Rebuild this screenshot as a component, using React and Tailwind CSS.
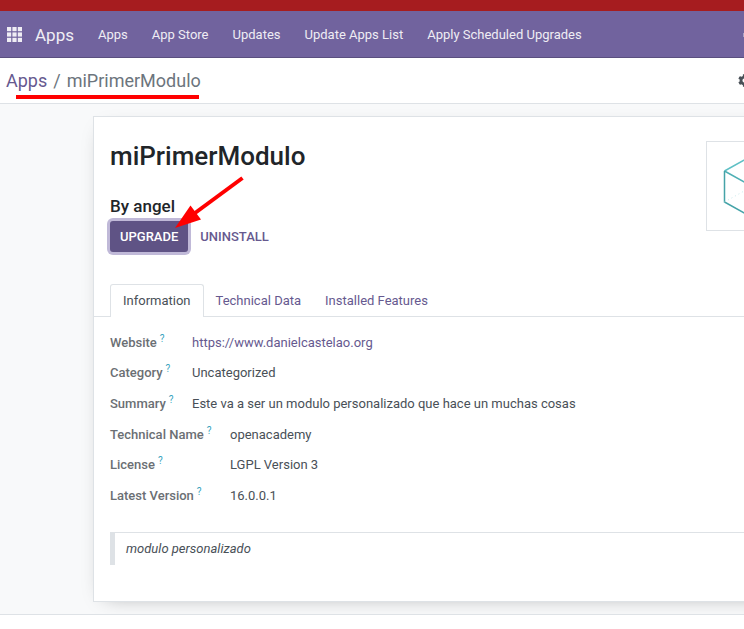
import { FaCog } from "react-icons/fa";

const menu = ["Apps", "App Store", "Updates", "Update Apps List", "Apply Scheduled Upgrades"];
const tabs = ["Information", "Technical Data", "Installed Features"];
const general = [
  ["Website", "https://www.danielcastelao.org", true],
  ["Category", "Uncategorized"],
  ["Summary", "Este va a ser un modulo personalizado que hace un muchas cosas"],
];
const technical = [
  ["Technical Name", "openacademy"],
  ["License", "LGPL Version 3"],
  ["Latest Version", "16.0.0.1"],
];

function GridIcon() {
  return (
    <svg width="15" height="15" viewBox="0 0 15 15" fill="#efedf4" aria-hidden="true">
      {[0, 5.4, 10.8].map((y) =>
        [0, 5.4, 10.8].map((x) => <rect key={`${x}-${y}`} x={x} y={y} width="4.2" height="4.2" />)
      )}
    </svg>
  );
}

function Field({ label, value, link, labelClass }) {
  return (
    <div className="flex items-center odd:h-[31px] even:h-[30px]">
      <dt className={`${labelClass} shrink-0 whitespace-nowrap font-medium text-[#6b6f74]`}>
        {label}
        <sup className="ml-[3px] text-[10px] leading-none font-normal text-[#38a3bd]">?</sup>
      </dt>
      <dd className="whitespace-nowrap text-[#495057]">
        {link ? <a href={value} className="text-[#66598f]">{value}</a> : value}
      </dd>
    </div>
  );
}

export default function App() {
  return (
    <div className="relative flex min-h-screen flex-col overflow-hidden bg-white font-['Roboto',sans-serif] text-[13px] leading-5 text-[#495057]">
      <div className="h-[11px] bg-[#a61c1f]" />
      <nav className="flex h-[47px] items-center border-b border-[#5a4f7f] bg-[#71639e] pt-px pl-[7px] text-[#efedf4]">
        <button aria-label="Home menu"><GridIcon /></button>
        <a href="#apps" className="mr-3 ml-[13px] text-[17px]">Apps</a>
        <div className="flex">
          {menu.map((item) => (
            <a key={item} href="#menu" className="px-3 whitespace-nowrap">{item}</a>
          ))}
        </div>
        <button aria-label="Messages" className="ml-auto h-1 w-px bg-[#a9a1c5]" />
      </nav>
      <header className="flex h-[46px] items-center justify-between overflow-hidden border-b border-[#dee2e6] pl-1.5">
        <div className="flex gap-1.5 text-[18px]">
          <a href="#apps" className="text-[#66598f]">Apps</a>
          <span className="text-[#6c757d]">/</span>
          <span className="text-[#6c757d]">miPrimerModulo</span>
        </div>
        <button aria-label="Action" className="w-1.5 overflow-hidden text-[#495057]">
          <FaCog size={13} className="max-w-none" />
        </button>
      </header>

      <main className="bg-[#f8f9fa] py-3 pl-[93px]">
        <section className="-mr-8 border border-[#dee2e6] bg-white pt-6 pb-9 shadow-[0_5px_20px_-12px_#00000066]">
          <div className="flex items-start justify-between pr-[31px] pl-4">
            <div>
              <h1 className="mb-[25px] text-[26px] leading-[30px] font-medium text-[#212529]">miPrimerModulo</h1>
              <h2 className="mb-[5px] text-[17px] leading-5 font-medium text-[#212529]">By angel</h2>
              <div className="flex items-center gap-3 font-medium">
                <button className="h-[31px] rounded-[3px] bg-[#5f5385] px-2.5 text-white ring-3 ring-[#c0b9d8]">UPGRADE</button>
                <button className="h-[31px] text-[#66598f]">UNINSTALL</button>
              </div>
            </div>
            <div className="h-[90px] w-[38px] overflow-hidden border border-r-0 border-[#dee2e6]">
              <svg className="max-w-none" width="88" height="88" viewBox="0 0 88 88" fill="none" strokeWidth="1.5" role="img" aria-label="Module icon">
                <path d="M17.500 29L46 13L74.500 29" stroke="#5fc0c5" />
                <path d="M17.500 29L46 45L74.500 29" stroke="#4fb0b5" />
                <path d="M17.500 29V60L46 76L74.500 60V29" stroke="#45a3a8" />
                <path d="M17.500 60L46 44L74.500 60" stroke="#c7e9eb" strokeWidth="1" strokeDasharray="1 3" />
              </svg>
            </div>
          </div>

          <div role="tablist" className="mt-8 flex border-b border-[#dee2e6] pl-4">
            {tabs.map((tab, i) => (
              <button
                key={tab}
                role="tab"
                aria-selected={i === 0}
                className={
                  i === 0
                    ? "-mb-px h-[33px] rounded-t-[3px] border border-b-0 border-[#dee2e6] bg-white px-3 text-[#495057]"
                    : "h-8 px-3 pt-px text-[#66598f]"
                }
              >
                {tab}
              </button>
            ))}
          </div>

          <dl className="mt-2.5 pl-4">
            {general.map(([label, value, link]) => (
              <Field key={label} label={label} value={value} link={link} labelClass="w-[82px]" />
            ))}
          </dl>
          <dl className="pl-4">
            {technical.map(([label, value]) => (
              <Field key={label} label={label} value={value} labelClass="w-[120px]" />
            ))}
          </dl>
          <blockquote className="mt-[21px] ml-4 border-t border-l-5 border-t-[#dee2e6] border-l-[#dee2e6] pt-1.5 pb-1.5 pl-[11px] italic">
            modulo personalizado
          </blockquote>
        </section>
      </main>
      <footer className="relative grow border-t border-[#dee2e6] bg-white" />

      <svg className="pointer-events-none absolute top-0 left-0" width="260" height="240" viewBox="0 0 260 240" aria-hidden="true">
        <path d="M16 97H199" stroke="#ff0000" strokeWidth="4" />
        <path d="M242.5 178L195 213" stroke="#ff0000" strokeWidth="4" />
        <path d="M175 228L190.500 205.500L201 219.500Z" fill="#ff0000" />
      </svg>
    </div>
  );
}
